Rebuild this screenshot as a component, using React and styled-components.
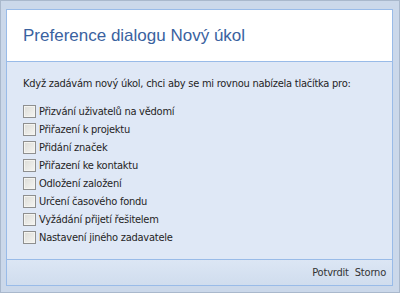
import React from 'react';
import styled, { createGlobalStyle } from 'styled-components';

const GlobalStyle = createGlobalStyle`
  html, body {
    margin: 0;
    padding: 0;
    background: #fff;
  }
  body {
    font-family: Tahoma, "DejaVu Sans", "Liberation Sans", sans-serif;
  }
`;

const Frame = styled.div`
  width: 400px;
  height: 293px;
  box-sizing: border-box;
  background: #cbd8ea;
  border: 1px solid #a9b8cc;
  padding: 8px 6px 6px 5px;
  display: flex;
`;

const Panel = styled.div`
  flex: 1;
  display: flex;
  flex-direction: column;
  border: 1px solid #99bbe8;
  background: #dfe8f6;
`;

const Header = styled.div`
  height: 51px;
  background: #fff;
  border-bottom: 1px solid #99bbe8;
  display: flex;
  align-items: center;
  padding-left: 16px;
`;

const Title = styled.h1`
  margin: 0;
  font-family: "Liberation Sans", Arial, sans-serif;
  font-weight: normal;
  font-size: 17px;
  color: #3a62a0;
`;

const Body = styled.div`
  flex: 1;
  padding: 15px 16px 0 16px;
`;

const Intro = styled.p`
  margin: 0 0 12px;
  font-family: "DejaVu Sans Condensed", "DejaVu Sans", sans-serif;
  font-size: 11px;
  letter-spacing: -0.25px;
  color: #1f1f1f;
`;

const Options = styled.div`
  display: flex;
  flex-direction: column;
`;

const Option = styled.label`
  display: flex;
  align-items: center;
  height: 18px;
  font-family: "DejaVu Sans Condensed", "DejaVu Sans", sans-serif;
  font-size: 11px;
  letter-spacing: -0.25px;
  color: #1f1f1f;
`;

const Box = styled.span`
  width: 11px;
  height: 11px;
  margin-right: 3px;
  border: 1px solid #8e8f8f;
  background: linear-gradient(135deg, #dcdcd7 0%, #f5f5f2 100%);
  box-shadow: inset 0 0 0 1px #f4f4f0;
`;

const Footer = styled.div`
  height: 25px;
  border-top: 1px solid #99bbe8;
  background: linear-gradient(#dce6f4, #d0ddee);
  display: flex;
  justify-content: flex-end;
  align-items: center;
  gap: 6px;
  padding-right: 6px;
`;

const Action = styled.button`
  border: none;
  background: none;
  padding: 0;
  font-family: "DejaVu Sans Condensed", "DejaVu Sans", sans-serif;
  font-size: 11px;
  letter-spacing: -0.2px;
  color: #333;
  cursor: pointer;
`;

const options = [
  'Přizvání uživatelů na vědomí',
  'Přiřazení k projektu',
  'Přidání značek',
  'Přiřazení ke kontaktu',
  'Odložení založení',
  'Určení časového fondu',
  'Vyžádání přijetí řešitelem',
  'Nastavení jiného zadavatele',
];

export default function App() {
  return (
    <>
      <GlobalStyle />
      <Frame>
        <Panel>
          <Header>
            <Title>Preference dialogu Nový úkol</Title>
          </Header>
          <Body>
            <Intro>Když zadávám nový úkol, chci aby se mi rovnou nabízela tlačítka pro:</Intro>
            <Options>
              {options.map(o => (
                <Option key={o}>
                  <Box />
                  {o}
                </Option>
              ))}
            </Options>
          </Body>
          <Footer>
            <Action>Potvrdit</Action>
            <Action>Storno</Action>
          </Footer>
        </Panel>
      </Frame>
    </>
  );
}
